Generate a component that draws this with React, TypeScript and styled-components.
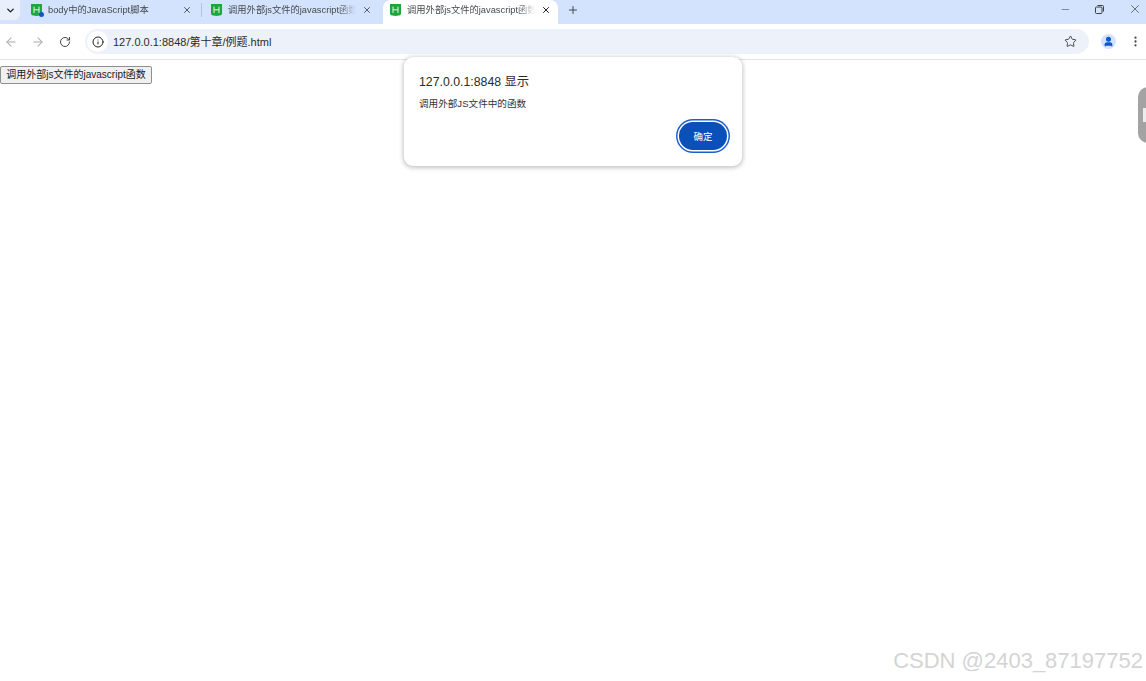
import React, { FC } from 'react';
import styled, { createGlobalStyle } from 'styled-components';
import { ArrowLeft, ArrowRight, ChevronDown, Info, Minus, MoreVertical, Plus, RotateCw, Star, User, X } from 'lucide-react';

const CJK = `"Liberation Sans", "Noto Sans CJK SC", sans-serif`;

const GlobalStyle = createGlobalStyle`
  html, body { margin: 0; padding: 0; background: #fff; }
  body { font-family: ${CJK}; }
  #root { height: 681px; overflow: hidden; }
`;

const Page = styled.div`
  position: relative;
  width: 1146px;
  height: 681px;
  overflow: hidden;
  background: #fff;
  display: flex;
  flex-direction: column;
`;

const TabStrip = styled.div`
  height: 24px;
  background: #d3e3fd;
  display: flex;
  align-items: flex-start;
  flex-shrink: 0;
`;

const TabSearch = styled.div`
  width: 20px;
  height: 20px;
  border-radius: 0 0 6px 0;
  background: #e9f0fc;
  display: flex;
  align-items: center;
  justify-content: center;
  color: #1f1f1f;
  margin-right: 3px;
`;

const Tab = styled.div<{ $active?: boolean }>`
  position: relative;
  width: ${p => (p.$active ? 175 : 174)}px;
  height: ${p => (p.$active ? 24 : 19)}px;
  box-sizing: border-box;
  padding: ${p => (p.$active ? '0 7px 5px' : '0 5px 0 8px')};
  margin-left: ${p => (p.$active ? 6 : 0)}px;
  display: flex;
  align-items: center;
  gap: 6px;
  background: ${p => (p.$active ? '#fff' : 'transparent')};
  border-radius: ${p => (p.$active ? '8px 8px 0 0' : '0')};
  flex-shrink: 0;
`;

const TabTitle = styled.span`
  flex: 1;
  min-width: 0;
  font-size: 9.3px;
  line-height: 18px;
  color: #45484c;
  white-space: nowrap;
  overflow: hidden;
  mask-image: linear-gradient(to right, #000 86%, transparent 100%);
`;

const FavDot = styled.span`
  position: absolute;
  right: -2px;
  bottom: -1px;
  width: 5px;
  height: 5px;
  border-radius: 50%;
  background: #0b57d0;
`;

const FavWrap = styled.span`
  position: relative;
  display: flex;
  flex-shrink: 0;
`;

const Separator = styled.div`
  width: 1px;
  height: 14px;
  margin: 3px 1px 0 4px;
  background: #a8c3ec;
  flex-shrink: 0;
`;

const PlusSlot = styled.div`
  width: 30px;
  height: 19px;
  display: flex;
  align-items: center;
  justify-content: center;
  color: #444746;
`;

const WindowControls = styled.div`
  margin-left: auto;
  display: flex;
  height: 18px;
  align-items: center;
  gap: 23px;
  padding-right: 4px;
  color: #3c4043;
`;

const Toolbar = styled.div`
  height: 36px;
  box-sizing: border-box;
  background: #fff;
  border-bottom: 1px solid #e3e3e3;
  display: flex;
  align-items: center;
  gap: 5px;
  flex-shrink: 0;
`;

const NavButton = styled.div<{ $muted?: boolean }>`
  width: 22px;
  display: flex;
  justify-content: center;
  color: ${p => (p.$muted ? '#a9acb0' : '#474747')};
`;

const Omnibox = styled.div`
  flex: 1;
  height: 25px;
  margin-left: 4px;
  border-radius: 13px;
  background: #edf2fa;
  display: flex;
  align-items: center;
  padding: 0 12px 0 2px;
`;

const SiteInfo = styled.div`
  width: 21px;
  height: 21px;
  border-radius: 50%;
  background: #fff;
  display: flex;
  align-items: center;
  justify-content: center;
  color: #1f1f1f;
`;

const Url = styled.span`
  margin-left: 5px;
  flex: 1;
  font-size: 11px;
  line-height: 14px;
  color: #2b2b2b;
`;

const Avatar = styled.div`
  width: 15px;
  height: 15px;
  margin: 0 6px 0 7px;
  border-radius: 50%;
  background: #d3e3fd;
  color: #0b57d0;
  display: flex;
  align-items: center;
  justify-content: center;
`;

const MenuButton = styled.div`
  width: 16px;
  margin-right: 3px;
  display: flex;
  justify-content: center;
  color: #444746;
`;

const Content = styled.div`
  flex: 1;
  padding-top: 6px;
`;

const PageButton = styled.button`
  display: block;
  width: 152px;
  height: 18px;
  box-sizing: border-box;
  padding: 0;
  font-family: ${CJK};
  font-size: 10px;
  line-height: 16px;
  color: #1a1a1a;
  background: #f0f0f0;
  border: 1px solid #8f8f8f;
  border-radius: 2px;
  white-space: nowrap;
`;

const Dialog = styled.div`
  position: absolute;
  left: 404px;
  top: 57px;
  width: 338px;
  height: 109px;
  box-sizing: border-box;
  padding: 17px 14px 0 15px;
  background: #fff;
  border-radius: 9px;
  box-shadow: 0 1px 4px 1px rgba(60, 64, 67, 0.3);
  display: flex;
  flex-direction: column;
`;

const DialogTitle = styled.div`
  font-size: 12.3px;
  line-height: 16px;
  color: #2b2b2b;
`;

const DialogMessage = styled.div`
  margin-top: 7px;
  font-size: 9.6px;
  line-height: 14px;
  color: #333;
`;

const DialogActions = styled.div`
  display: flex;
  justify-content: flex-end;
  margin-top: 11px;
`;

const OkButton = styled.button`
  width: 48px;
  height: 28px;
  padding: 0;
  border: none;
  border-radius: 14px;
  background: #0b4fb8;
  box-shadow: 0 0 0 1.5px #fff, 0 0 0 3px #1a5fd0;
  margin-right: 1px;
  font-family: ${CJK};
  font-size: 9.5px;
  color: #fff;
`;

const SidePill = styled.div`
  position: absolute;
  left: 1138px;
  top: 87px;
  width: 20px;
  height: 56px;
  border-radius: 10px;
  background: #a3a3a3;
`;

const SidePillMark = styled.div`
  position: absolute;
  left: 5px;
  top: 21px;
  width: 10px;
  height: 14px;
  background: #ececec;
`;

const Watermark = styled.div`
  position: absolute;
  right: 3px;
  bottom: 7px;
  font-family: "Liberation Sans", sans-serif;
  font-size: 22px;
  line-height: 26px;
  color: #d4d4d4;
  white-space: nowrap;
`;

const Favicon: FC = () => (
  <svg width="11" height="12" viewBox="0 0 11 12">
    <path d="M0 0h11v10l-1 1.2L5.5 12 1 11.2 0 10z" fill="#1ca63c" />
    <path d="M3 2.6v6.4M8 2.6v6.4M3 5.8h5" stroke="#e4f5e8" strokeWidth="1" fill="none" />
  </svg>
);

const RestoreIcon: FC = () => (
  <svg width="11" height="11" viewBox="0 0 11 11" fill="none" stroke="#3c4043" strokeWidth="1">
    <rect x="1.5" y="3" width="6.5" height="6.5" rx="1" />
    <path d="M3.5 1.5h5a1 1 0 0 1 1 1v5" />
  </svg>
);

const tabs = [
  { title: 'body中的JavaScript脚本', dot: true },
  { title: '调用外部js文件的javascript函数', dot: false },
];

const App: FC = () => (
  <Page>
    <GlobalStyle />
    <TabStrip>
      <TabSearch>
        <ChevronDown size={11} strokeWidth={3} />
      </TabSearch>
      {tabs.map(tab => (
        <React.Fragment key={tab.title}>
          <Tab>
            <FavWrap>
              <Favicon />
              {tab.dot && <FavDot />}
            </FavWrap>
            <TabTitle>{tab.title}</TabTitle>
            <X size={10} strokeWidth={2} color="#3c4043" />
          </Tab>
          {tab.dot && <Separator />}
        </React.Fragment>
      ))}
      <Tab $active>
        <FavWrap>
          <Favicon />
        </FavWrap>
        <TabTitle>调用外部js文件的javascript函数</TabTitle>
        <X size={10} strokeWidth={2.4} color="#1f1f1f" />
      </Tab>
      <PlusSlot>
        <Plus size={12} strokeWidth={2} />
      </PlusSlot>
      <WindowControls>
        <Minus size={11} strokeWidth={1.2} />
        <RestoreIcon />
        <X size={14} strokeWidth={1.2} />
      </WindowControls>
    </TabStrip>
    <Toolbar>
      <NavButton $muted>
        <ArrowLeft size={14} strokeWidth={1.8} />
      </NavButton>
      <NavButton $muted>
        <ArrowRight size={14} strokeWidth={1.8} />
      </NavButton>
      <NavButton>
        <RotateCw size={12} strokeWidth={2} />
      </NavButton>
      <Omnibox>
        <SiteInfo>
          <Info size={12} strokeWidth={2} />
        </SiteInfo>
        <Url>127.0.0.1:8848/第十章/例题.html</Url>
        <Star size={13} strokeWidth={1.8} color="#444746" />
      </Omnibox>
      <Avatar>
        <User size={11} strokeWidth={3} fill="#0b57d0" />
      </Avatar>
      <MenuButton>
        <MoreVertical size={13} strokeWidth={2.2} />
      </MenuButton>
    </Toolbar>
    <Content>
      <PageButton>调用外部js文件的javascript函数</PageButton>
    </Content>
    <Dialog>
      <DialogTitle>127.0.0.1:8848 显示</DialogTitle>
      <DialogMessage>调用外部JS文件中的函数</DialogMessage>
      <DialogActions>
        <OkButton>确定</OkButton>
      </DialogActions>
    </Dialog>
    <SidePill>
      <SidePillMark />
    </SidePill>
    <Watermark>CSDN @2403_87197752</Watermark>
  </Page>
);

export default App;
